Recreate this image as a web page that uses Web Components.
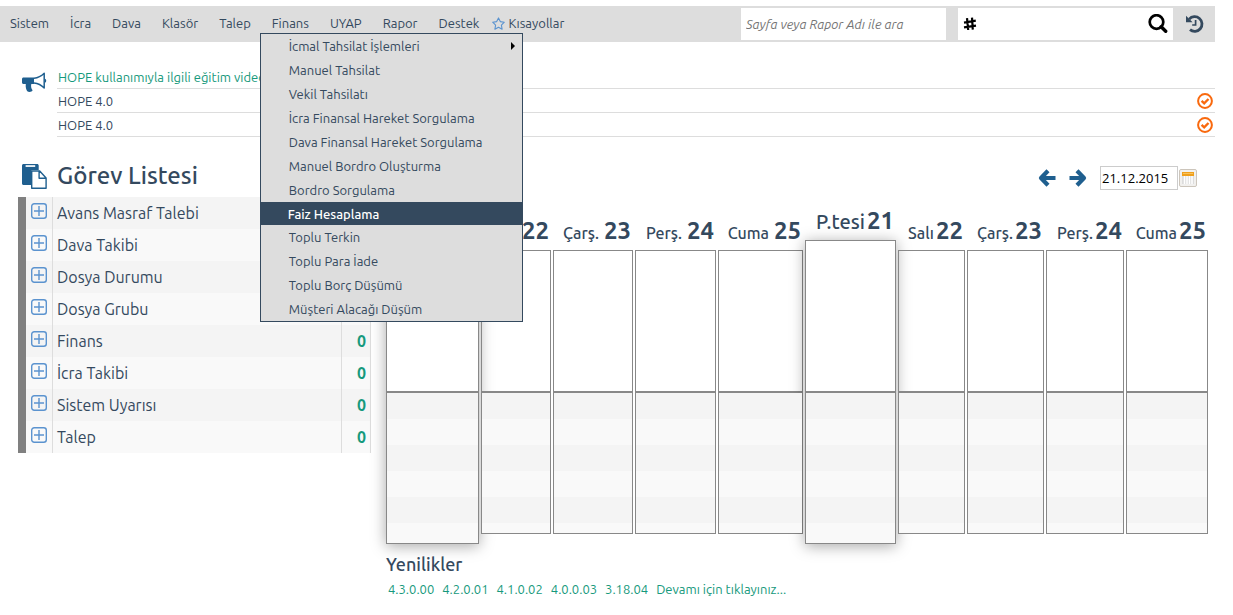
<!DOCTYPE html>
<html lang="tr">
<head>
<meta charset="utf-8">
<title>HOPE</title>
<style>
  body {
    margin: 0;
    font: 13px/24px Ubuntu, "Noto Sans", sans-serif;
    color: #34495e;
    background: #fff;
    --ink: #34495e;
    --bar: #ddd;
    --green: #16997c;
    --blue: #1f5f8f;
    --edge: #888;
  }
</style>
</head>
<body>
<hope-page></hope-page>

<template id="page">
  <style>
    :host { display: block; padding: 6px 18px 16px 0; }
    notice-board { margin: 23px 0 0 22px; }
    .work { display: grid; grid-template-columns: 353px 1fr; gap: 15px; margin: 22px 7px 0 18px; }
  </style>
  <top-bar></top-bar>
  <notice-board></notice-board>
  <main class="work">
    <task-list></task-list>
    <week-planner></week-planner>
  </main>
</template>

<template id="top">
  <style>
    :host { display: flex; align-items: center; height: 36px; background: var(--bar); }
    nav { display: flex; flex: 1; gap: 21px; padding: 0 0 2px 10px; }
    a { color: inherit; text-decoration: none; white-space: nowrap; }
    .fav { display: flex; align-items: center; gap: 3px; margin-left: -8px; }
    .finans { position: relative; }
    drop-menu { position: absolute; left: -12px; top: 22px; z-index: 10; }
    .search { box-sizing: border-box; width: 205px; height: 32px; margin: 0 12px 0 0; border: 0; padding: 0 5px;
      font: italic 13px Ubuntu, "Noto Sans", sans-serif; background: #fff; }
    .search::placeholder { color: #757575; }
    form { display: flex; align-items: center; width: 215px; height: 32px; background: #fff; }
    form label { display: flex; padding: 0 0 0 5px; }
    form input { flex: 1; min-width: 0; border: 0; outline: 0; font: inherit; background: none; }
    button { display: flex; border: 0; padding: 0; background: none; }
    form button { margin-right: 5px; }
    .history { margin: 0 10px 0 12px; }
  </style>
  <nav>
    <a href="#">Sistem</a><a href="#">İcra</a><a href="#">Dava</a><a href="#">Klasör</a><a href="#">Talep</a>
    <div class="finans"><a href="#">Finans</a><drop-menu></drop-menu></div>
    <a href="#">UYAP</a><a href="#">Rapor</a><a href="#">Destek</a>
    <a class="fav" href="#"><svg width="13" height="13" viewBox="0 0 13 13" fill="none" stroke="#5b93cf" stroke-width="1.1" stroke-linejoin="round"><path d="M6.5.9l1.8 3.7 4 .6-2.9 2.9.7 4.1-3.6-2-3.6 2 .7-4.1L.7 5.2l4-.6z"/></svg>Kısayollar</a>
  </nav>
  <input class="search" type="text" aria-label="Sayfa veya Rapor Adı ile ara" placeholder="Sayfa veya Rapor Adı ile ara">
  <form>
    <label for="no" aria-label="Dosya no"><svg width="14" height="14" viewBox="0 0 14 14" stroke="#000" stroke-width="2.2"><path d="M4 1.200L5.200 13M9 .600l.8 12M1 5.600L12.800 3.600M1 10.400l12-1.800"/></svg></label>
    <input id="no" type="text">
    <button type="button" aria-label="Ara"><svg width="20" height="20" viewBox="0 0 20 20" fill="none" stroke="#000"><circle cx="8.5" cy="8" r="6.8" stroke-width="2.700"/><path d="M13.200 12.700l4.500 4.500" stroke-width="3.400" stroke-linecap="round"/></svg></button>
  </form>
  <button class="history" type="button" aria-label="Geçmiş"><svg width="20" height="20" viewBox="0 0 20 20" fill="none" stroke="#34495e"><path d="M4.2 5.2A7.3 7.3 0 1 1 5 15.6" stroke-width="2.8"/><path d="M1 1.8v6.4h6.6z" fill="#34495e" stroke="none"/><path d="M10.6 6v5H7.2" stroke-width="1.7"/></svg></button>
</template>

<template id="menu">
  <style>
    :host { display: block; box-sizing: border-box; width: 263px; border: 1px solid var(--ink); background: var(--bar); }
    ul { list-style: none; margin: 0; padding: 0; }
    a { display: flex; justify-content: space-between; align-items: center; padding: 0 6px 0 28px; height: 24px; color: inherit; text-decoration: none; white-space: nowrap; }
    .on { height: 23px; padding-left: 27px; background: var(--ink); color: #fff; font-weight: 500; }
  </style>
  <ul>
    <li><a href="#">İcmal Tahsilat İşlemleri<svg width="6" height="8" viewBox="0 0 6 8"><path d="M1 0l4 4-4 4z"/></svg></a></li>
    <li><a href="#">Manuel Tahsilat</a></li>
    <li><a href="#">Vekil Tahsilatı</a></li>
    <li><a href="#">İcra Finansal Hareket Sorgulama</a></li>
    <li><a href="#">Dava Finansal Hareket Sorgulama</a></li>
    <li><a href="#">Manuel Bordro Oluşturma</a></li>
    <li><a href="#">Bordro Sorgulama</a></li>
    <li><a class="on" href="#">Faiz Hesaplama</a></li>
    <li><a href="#">Toplu Terkin</a></li>
    <li><a href="#">Toplu Para İade</a></li>
    <li><a href="#">Toplu Borç Düşümü</a></li>
    <li><a href="#">Müşteri Alacağı Düşüm</a></li>
  </ul>
</template>

<template id="notices">
  <style>
    :host { display: grid; grid-template-columns: 25px 1fr; gap: 10px; }
    .horn { margin-top: 7px; }
    ul { list-style: none; margin: 0; padding: 0; }
    li { box-sizing: border-box; height: 24px; padding: 0 2px 0 1px; border-bottom: 1px solid var(--bar); display: flex; justify-content: space-between; align-items: center; }
    a { color: var(--green); text-decoration: none; }
    button { display: flex; border: 0; padding: 0; background: none; }
  </style>
  <svg class="horn" width="25" height="22" viewBox="0 0 25 22"><path fill="#1f5f8f" d="M1.600 5.500H12v6.400H9.300c-.6 2.600 0 4.400 1.300 6.300-.6 1.800-3.700 2.200-5.300 1.100C4.300 17.400 3.300 15 3.800 11.900H1.600C.6 11.900 0 11.200 0 10.400V7C0 6.200.6 5.500 1.600 5.500z"/><path fill="none" stroke="#1f5f8f" stroke-width="1.500" stroke-linejoin="round" d="M12 6.300c4-.4 7.600-2.400 10.200-5v14.800c-2.600-2.700-6.200-4.600-10.200-5"/><path fill="#1f5f8f" d="M23 6.800c1.700.5 1.700 3.400 0 4z"/></svg>
  <ul>
    <li><a href="#">HOPE kullanımıyla ilgili eğitim videoları</a></li>
    <li>HOPE 4.0<button type="button" aria-label="Okundu"><svg width="16" height="16" viewBox="0 0 16 16" fill="none" stroke="#f9690e"><circle cx="8" cy="8" r="6.900" stroke-width="2"/><path d="M4.600 7.800l2.600 2.500 4.300-4.300" stroke-width="2.400"/></svg></button></li>
    <li>HOPE 4.0<button type="button" aria-label="Okundu"><svg width="16" height="16" viewBox="0 0 16 16" fill="none" stroke="#f9690e"><circle cx="8" cy="8" r="6.900" stroke-width="2"/><path d="M4.600 7.800l2.600 2.500 4.300-4.300" stroke-width="2.400"/></svg></button></li>
  </ul>
</template>

<template id="tasks">
  <style>
    :host { display: block; }
    h1 { display: flex; align-items: center; gap: 10px; height: 34px; margin: 0 0 4px 4px; font-size: 24px; font-weight: 500; }
    table { width: 100%; border-collapse: separate; border-spacing: 0; border-left: 8px solid #808080; font-size: 16px; }
    tr { background: #f9f9f9; }
    tr:nth-child(odd) { background: #f4f4f4; }
    td { height: 32px; padding: 0 4px; border-right: 1px solid var(--bar); }
    td:first-child { width: 18px; vertical-align: top; }
    td:last-child { width: 20px; text-align: right; font-weight: 700; color: var(--green); }
    button { display: flex; margin: 6px 0 0 1px; border: 0; padding: 0; background: none; }
  </style>
  <h1><svg width="25" height="25" viewBox="0 0 25 25"><path fill="#1f5f8f" d="M0 1.500C0 .700.700 0 1.500 0h13.700c.800 0 1.500.700 1.500 1.500V6H9.600v15H1.500C.700 21 0 20.300 0 19.500z"/><path fill="#fff" d="M3.600 1.200h9.600v1.700H3.600z"/><path fill="#fff" stroke="#1f5f8f" stroke-width="1.400" stroke-linejoin="round" d="M9.700 7h8l6.400 7v10.200H9.700zM17.100 7v7.300h7"/></svg>Görev Listesi</h1>
  <table><tbody></tbody></table>
</template>

<template id="planner">
  <style>
    :host { display: block; }
    .tools { display: flex; justify-content: flex-end; align-items: center; height: 38px; padding-right: 11px; }
    .tools button { display: flex; padding: 0; border: 0; background: none; }
    .prev { margin-right: 13px; }
    .next { margin-right: 13px; }
    input { box-sizing: border-box; width: 78px; height: 24px; margin: 0 1px 0 0; padding: 0 1px; border: 1px solid #ccc; font: 13px "Open Sans", "Noto Sans", sans-serif; color: #000; }
    .days { display: grid; grid-template-columns: 93fr 70fr 80fr 81fr 85fr 91fr 67fr 77fr 78fr 82fr; column-gap: 2px; align-items: start; padding-top: 8px; }
    h2 { margin: 8px 0 0; font-size: 18px; font-weight: 500; line-height: 24px; }
    .news { display: flex; gap: 8px; padding: 1px 2px 0; }
    .news a { color: var(--green); text-decoration: none; }
  </style>
  <div class="tools">
    <button class="prev" type="button" aria-label="Önceki"><svg width="18" height="18" viewBox="0 0 18 18" fill="none" stroke="#1f5f8f" stroke-width="4.200" stroke-linejoin="round"><path d="M10 1.800L3 9l7 7.200M3.500 9H17.500"/></svg></button>
    <button class="next" type="button" aria-label="Sonraki"><svg width="18" height="18" viewBox="0 0 18 18" fill="none" stroke="#1f5f8f" stroke-width="4.200" stroke-linejoin="round"><path d="M8 1.800L15 9l-7 7.200M14.500 9H.5"/></svg></button>
    <input type="text" aria-label="Tarih" value="21.12.2015">
    <button type="button" aria-label="Takvim"><svg width="18" height="18" viewBox="0 0 18 18"><rect x=".5" y=".5" width="17" height="17" rx="1.500" fill="#f1f0ee" stroke="#ccc5bb"/><path fill="#dcdcdc" d="M3 6h12v9H3z"/><path stroke="#fff" stroke-width="1.500" d="M5.500 7v8M8 7v8M10.500 7v8M13 7v8"/><path fill="#f0a01c" d="M3 3h12v4H3z"/><path fill="#f8c25c" d="M4 4h10v1H4z"/></svg></button>
  </div>
  <div class="days">
    <day-column name="P.tesi" day="21" first></day-column>
    <day-column name="Salı" day="22"></day-column>
    <day-column name="Çarş." day="23" spaced></day-column>
    <day-column name="Perş." day="24" spaced></day-column>
    <day-column name="Cuma" day="25" spaced></day-column>
    <day-column name="P.tesi" day="21" first></day-column>
    <day-column name="Salı" day="22"></day-column>
    <day-column name="Çarş." day="23"></day-column>
    <day-column name="Perş." day="24"></day-column>
    <day-column name="Cuma" day="25"></day-column>
  </div>
  <h2>Yenilikler</h2>
  <div class="news"><a href="#">4.3.0.00</a><a href="#">4.2.0.01</a><a href="#">4.1.0.02</a><a href="#">4.0.0.03</a><a href="#">3.18.04</a><a href="#">Devamı için tıklayınız...</a></div>
</template>

<template id="day">
  <style>
    :host { display: block; min-width: 0; padding-top: 10px; }
    :host([first]) { padding-top: 0; }
    .head { display: flex; justify-content: flex-end; align-items: baseline; gap: 2px; height: 35px; line-height: 32px; padding-right: 2px; font-size: 16px; font-weight: 500; white-space: nowrap; }
    :host([first]) .head { font-size: 20px; }
    :host([spaced]) .head { gap: 5px; }
    b { font-size: 24px; font-weight: 700; }
    .box { border: 1px solid var(--edge); }
    :host([first]) .box { box-shadow: 0 2px 14px rgba(0,0,0,.35); background: #fff; }
    .open { height: 140px; border-bottom: 2px solid var(--edge); }
    :host([first]) .open { height: 150px; }
    .slots { position: relative; height: 140px; background: repeating-linear-gradient(#f4f4f4 0 26px, #f9f9f9 26px 52px); }
    :host([first]) .slots { height: 150px; }
  </style>
  <div class="head"><span></span><b></b></div>
  <div class="box"><div class="open"></div><div class="slots"></div></div>
</template>

<script>
  const define = (tag, id, setup) => customElements.define(tag, class extends HTMLElement {
    connectedCallback() {
      if (this.shadowRoot) return;
      const root = this.attachShadow({ mode: 'open' });
      root.append(document.getElementById(id).content.cloneNode(true));
      if (setup) setup(root, this);
    }
  });

  define('drop-menu', 'menu');
  define('top-bar', 'top');
  define('notice-board', 'notices');
  define('task-list', 'tasks', root => {
    const names = ['Avans Masraf Talebi', 'Dava Takibi', 'Dosya Durumu', 'Dosya Grubu', 'Finans', 'İcra Takibi', 'Sistem Uyarısı', 'Talep'];
    root.querySelector('tbody').innerHTML = names.map(name => `<tr>
      <td><button type="button" aria-label="${name} aç"><svg width="16" height="16" viewBox="0 0 16 16" fill="none" stroke="#5b93cf" stroke-width="1.400"><rect x=".7" y=".7" width="14.600" height="14.600" rx="2.500"/><path d="M8 3v10M3 8h10"/></svg></button></td>
      <td>${name}</td><td>0</td></tr>`).join('');
  });
  define('day-column', 'day', (root, host) => {
    root.querySelector('span').textContent = host.getAttribute('name');
    root.querySelector('b').textContent = host.getAttribute('day');
  });
  define('week-planner', 'planner');
  define('hope-page', 'page');
</script>
</body>
</html>
